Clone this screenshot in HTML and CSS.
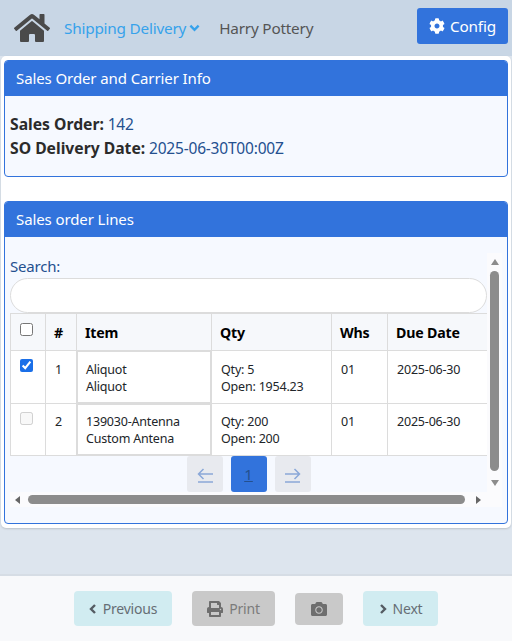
FILE: index.html
```html
<!DOCTYPE html>
<html lang="en">
<head>
<meta charset="utf-8">
<title>Shipping Delivery</title>
<link rel="stylesheet" href="styles.css">
</head>
<body>
<div class="app">
  <nav class="nav">
    <svg class="home" viewBox="0 0 576 512"><path d="M280.37 148.26L96 300.11V464a16 16 0 0 0 16 16l112.06-.29a16 16 0 0 0 15.92-16V368a16 16 0 0 1 16-16h64a16 16 0 0 1 16 16v95.64a16 16 0 0 0 16 16.05L464 480a16 16 0 0 0 16-16V300L295.67 148.26a12.19 12.19 0 0 0-15.3 0zM571.6 251.47L488 182.56V44.05a12 12 0 0 0-12-12h-56a12 12 0 0 0-12 12v72.61L318.47 43a48 48 0 0 0-61 0L4.34 251.47a12 12 0 0 0-1.6 16.9l25.5 31A12 12 0 0 0 45.15 301l235.22-193.74a12.19 12.19 0 0 1 15.3 0L530.9 301a12 12 0 0 0 16.9-1.6l25.5-31a12 12 0 0 0-1.7-16.93z"/></svg>
    <a class="nav-link">Shipping Delivery</a>
    <svg class="chev" viewBox="0 0 12 8"><polyline points="1.5,1.5 6,6 10.5,1.5"/></svg>
    <span class="nav-user">Harry Pottery</span>
    <button class="config"><svg class="cog" viewBox="0 0 512 512"><path d="M487.4 315.7l-42.6-24.6c4.3-23.2 4.3-47 0-70.2l42.6-24.6c4.9-2.8 7.1-8.6 5.5-14-11.1-35.6-30-67.8-54.7-94.6-3.8-4.1-10-5.1-14.8-2.3L380.8 110c-17.9-15.4-38.5-27.3-60.8-35.1V25.8c0-5.6-3.9-10.5-9.4-11.7-36.7-8.2-74.3-7.8-109.2 0-5.5 1.2-9.4 6.1-9.4 11.7V75c-22.2 7.9-42.8 19.8-60.8 35.1L88.7 85.5c-4.9-2.8-11-1.9-14.8 2.3-24.7 26.7-43.6 58.9-54.7 94.6-1.7 5.4.6 11.2 5.5 14L67.3 221c-4.3 23.2-4.3 47 0 70.2l-42.6 24.6c-4.9 2.8-7.1 8.6-5.5 14 11.1 35.6 30 67.8 54.7 94.6 3.8 4.1 10 5.1 14.8 2.3l42.6-24.6c17.9 15.4 38.5 27.3 60.8 35.1v49.2c0 5.6 3.9 10.5 9.4 11.7 36.7 8.2 74.3 7.8 109.2 0 5.5-1.2 9.4-6.1 9.4-11.7v-49.2c22.2-7.9 42.8-19.8 60.8-35.1l42.6 24.6c4.9 2.8 11 1.9 14.8-2.3 24.7-26.7 43.6-58.9 54.7-94.6 1.5-5.5-.7-11.3-5.6-14.1zM256 336c-44.1 0-80-35.9-80-80s35.9-80 80-80 80 35.9 80 80-35.9 80-80 80z"/></svg>Config</button>
  </nav>

  <main class="panel">
    <section class="card card-info">
      <h2 class="card-head">Sales Order and Carrier Info</h2>
      <div class="info-body">
        <p class="info-line"><b>Sales Order:</b> 142</p>
        <p class="info-line"><b>SO Delivery Date:</b> 2025-06-30T00:00Z</p>
      </div>
    </section>

    <section class="card card-lines">
      <h2 class="card-head">Sales order Lines</h2>
      <div class="lines-body">
        <div class="scroller">
          <div class="scroll-content">
            <div class="search-label">Search:</div>
            <div class="search-input"></div>
            <table class="grid">
              <thead>
                <tr>
                  <th class="c-check"><input type="checkbox" class="chk"></th>
                  <th class="c-num">#</th>
                  <th class="c-item">Item</th>
                  <th class="c-qty">Qty</th>
                  <th class="c-whs">Whs</th>
                  <th class="c-date">Due Date</th>
                </tr>
              </thead>
              <tbody>
                <tr class="row-one">
                  <td class="c-check"><input type="checkbox" class="chk" checked></td>
                  <td>1</td>
                  <td class="cell-item">Aliquot<br>Aliquot</td>
                  <td>Qty: 5<br>Open: 1954.23</td>
                  <td>01</td>
                  <td>2025-06-30</td>
                </tr>
                <tr class="row-two">
                  <td class="c-check"><input type="checkbox" class="chk" disabled></td>
                  <td>2</td>
                  <td class="cell-item">139030-Antenna<br>Custom Antena</td>
                  <td>Qty: 200<br>Open: 200</td>
                  <td>01</td>
                  <td>2025-06-30</td>
                </tr>
              </tbody>
            </table>
            <div class="pager">
              <a class="page-btn muted"><svg class="arrow" viewBox="0 0 16 15"><path d="M6.5 1 1.5 6l5 5M2 6h14M1 14h15"/></svg></a>
              <a class="page-btn active">1</a>
              <a class="page-btn muted"><svg class="arrow" viewBox="0 0 16 15"><path d="M9.5 1l5 5-5 5M14 6H0M0 14h15"/></svg></a>
            </div>
          </div>
          <div class="vbar">
            <span class="tri tri-up"></span>
            <span class="vthumb"></span>
            <span class="tri tri-down"></span>
          </div>
          <div class="hbar">
            <span class="tri tri-left"></span>
            <span class="hthumb"></span>
            <span class="tri tri-right"></span>
          </div>
        </div>
      </div>
    </section>
  </main>

  <div class="spacer"></div>

  <footer class="footer">
    <button class="btn btn-light btn-prev"><svg class="chev-s" viewBox="0 0 8 12"><polyline points="6,2 2,6 6,10"/></svg>Previous</button>
    <button class="btn btn-grey"><svg class="ico-print" viewBox="0 0 512 512"><path d="M448 192V77.25c0-8.49-3.37-16.62-9.37-22.63L393.37 9.37c-6-6-14.14-9.37-22.63-9.37H96C78.33 0 64 14.33 64 32v160c-35.35 0-64 28.65-64 64v112c0 8.84 7.16 16 16 16h48v96c0 17.67 14.33 32 32 32h320c17.67 0 32-14.33 32-32v-96h48c8.84 0 16-7.16 16-16V256c0-35.35-28.65-64-64-64zm-64 256H128v-96h256v96zm0-224H128V64h192v48c0 8.84 7.16 16 16 16h48v96zm48 72c-13.25 0-24-10.75-24-24 0-13.26 10.75-24 24-24s24 10.74 24 24c0 13.25-10.75 24-24 24z"/></svg>Print</button>
    <button class="btn btn-grey btn-cam"><svg class="ico-cam" viewBox="0 0 512 512"><path d="M512 144v288c0 26.5-21.5 48-48 48H48c-26.5 0-48-21.5-48-48V144c0-26.5 21.5-48 48-48h88l12.3-32.9c7-18.7 24.9-31.1 44.9-31.1h125.5c20 0 37.9 12.4 44.9 31.1L376 96h88c26.5 0 48 21.5 48 48zM376 288c0-66.2-53.8-120-120-120s-120 53.8-120 120 53.8 120 120 120 120-53.8 120-120zm-32 0c0 48.5-39.5 88-88 88s-88-39.5-88-88 39.5-88 88-88 88 39.5 88 88z"/></svg></button>
    <button class="btn btn-light btn-next"><svg class="chev-s" viewBox="0 0 8 12"><polyline points="2,2 6,6 2,10"/></svg>Next</button>
  </footer>
</div>
</body>
</html>
```

FILE: styles.css
```css
* { box-sizing: border-box; }
html, body { margin: 0; height: 100%; }
body {
  font-family: "Noto Sans", "Open Sans", sans-serif;
  background: #dde5ee;
  color: #212529;
  overflow: hidden;
}
.app { display: flex; flex-direction: column; height: 641px; }

.nav {
  height: 56px;
  flex: none;
  background: #c8d6e5;
  display: flex;
  align-items: center;
  padding: 0 0 0 14px;
}
.home { width: 36px; height: 32px; fill: #4a4a4a; }
.nav-link { color: #36a2eb; font-size: 15.3px; margin-left: 14px; letter-spacing: -0.2px; }
.chev { width: 11px; height: 8px; margin-left: 3px; fill: none; stroke: #36a2eb; stroke-width: 2.6; }
.nav-user { color: #555; font-size: 15.3px; margin-left: 19px; letter-spacing: -0.2px; }
.config {
  margin-left: auto;
  margin-right: 4px;
  margin-top: -4px;
  width: 91px;
  height: 36px;
  background: #3273dc;
  border: 0;
  border-radius: 3px;
  color: #fff;
  font: inherit;
  font-size: 15.3px;
  letter-spacing: -0.2px;
  display: flex;
  align-items: center;
  justify-content: center;
  gap: 5px;
  padding: 0;
}
.cog { width: 16px; height: 16px; fill: #fff; }

.panel {
  flex: none;
  height: 472px;
  background: #fff;
  border-radius: 5px;
  margin: 0 1px;
  padding: 4px 3px;
  display: flex;
  flex-direction: column;
  gap: 24px;
  box-shadow: 0 1px 2px rgba(0,0,0,.15);
}
.card {
  border: 1px solid #3273dc;
  border-radius: 4px;
  background: #f6f9ff;
  overflow: hidden;
}
.card-info { height: 117px; }
.card-lines { height: 323px; }
.card-head {
  height: 36px;
  margin: -1px -1px 0;
  background: #3273dc;
  color: #fff;
  font-size: 15px;
  font-weight: 400;
  line-height: 36px;
  padding-left: 12px;
  letter-spacing: -0.1px;
}
.info-body { padding: 16px 5px 0; }
.info-line { margin: 0; font-size: 15.5px; line-height: 24px; color: #24508f; letter-spacing: -0.2px; }
.info-line b { color: #2b2b2b; font-weight: 700; font-size: 15.7px; letter-spacing: 0; }

.lines-body { padding: 16px 5px 0; }
.scroller {
  display: grid;
  grid-template-columns: 477px 15px;
  grid-template-rows: 239px 15px;
  width: 492px;
}
.scroll-content { overflow: hidden; padding-top: 3px; }
.search-label { font-size: 15px; line-height: 20px; color: #24508f; letter-spacing: -0.2px; }
.search-input {
  height: 35px;
  margin-top: 2px;
  background: #fff;
  border: 1px solid #dcdcdc;
  border-radius: 18px;
}
.grid {
  border-collapse: collapse;
  table-layout: fixed;
  width: 477px;
  font-size: 12.5px;
  color: #212529;
}
.grid th, .grid td { border: 1px solid #dcdcdc; text-align: left; vertical-align: top; }
.grid th {
  background: #f6f8fb;
  color: #000;
  font-size: 14.2px;
  font-weight: 700;
  height: 37px;
  vertical-align: middle;
  padding: 0 8px;
  letter-spacing: -0.2px;
}
.grid td { background: #fff; padding: 10px 9px 0; line-height: 17px; height: 53px; letter-spacing: -0.2px; }
.grid .row-two td { height: 52px; padding-top: 9px; }
.grid .c-check { width: 35px; padding: 0 4px 0 0; text-align: center; }
.grid .c-num { width: 31px; }
.grid .c-item { width: 135px; }
.grid .c-qty { width: 120px; }
.grid .c-whs { width: 56px; }
.grid .c-date { width: 100px; }
.grid tr td.c-check { padding: 8px 4px 0 0; }
.grid th.c-check { padding-bottom: 4px; }
.grid .cell-item { box-shadow: inset 0 0 0 1px #dcdcdc; }
.chk { width: 13px; height: 13px; margin: 0; accent-color: #1a6fe8; }

.pager { display: flex; justify-content: center; gap: 8px; }
.page-btn {
  width: 36px;
  height: 36px;
  border-radius: 3px;
  text-align: center;
  line-height: 36px;
  display: flex;
  align-items: center;
  justify-content: center;
}
.page-btn.muted { background: #e8eaef; }
.page-btn.active { background: #3273dc; color: #24508f; font-size: 15px; text-decoration: underline; }
.arrow { width: 16px; height: 15px; margin-top: 2px; fill: none; stroke: #8aa8d8; stroke-width: 1.5; }

.vbar, .hbar { background: #fbfbfd; display: flex; align-items: center; }
.vbar { flex-direction: column; padding-top: 6px; grid-column: 2; grid-row: 1; height: 239px; }
.vthumb { width: 9px; height: 200px; margin: 6px 0 9px; background: #8c8c8c; border-radius: 5px; }
.hbar { grid-column: 1 / 3; grid-row: 2; padding-left: 5px; height: 15px; }
.hthumb { width: 437px; height: 9px; margin: 0 11px 0 8px; background: #8c8c8c; border-radius: 5px; }
.tri { width: 0; height: 0; display: block; flex: none; }
.tri-up { border: 4px solid transparent; border-top: 0; border-bottom: 6px solid #8c8c8c; }
.tri-down { border: 4px solid transparent; border-bottom: 0; border-top: 6px solid #8c8c8c; }
.tri-left { border: 4px solid transparent; border-left: 0; border-right: 5px solid #666; }
.tri-right { border: 4px solid transparent; border-right: 0; border-left: 5px solid #666; }

.spacer { flex: 1; }
.footer {
  flex: none;
  height: 67px;
  background: #f8f9fb;
  border-top: 2px solid #d6dde5;
  display: flex;
  align-items: center;
  justify-content: center;
  gap: 20px;
}
.btn {
  height: 35px;
  border: 0;
  border-radius: 4px;
  font: inherit;
  font-size: 14px;
  letter-spacing: -0.2px;
  color: #666e75;
  display: flex;
  align-items: center;
  justify-content: center;
  padding: 0;
}
.btn-light { background: #d1ecf1; }
.btn-prev { width: 98px; }
.btn-next { width: 75px; }
.btn-grey { background: #c9c9c9; width: 83px; color: #7b7b7b; }
.btn-cam { width: 48px; height: 32px; }
.chev-s { width: 8px; height: 12px; fill: none; stroke: #555c63; stroke-width: 2.4; margin-right: 6px; }
.ico-print { width: 16px; height: 16px; fill: #6e6e6e; margin-right: 6px; }
.ico-cam { width: 16px; height: 16px; fill: #6e6e6e; }
```
